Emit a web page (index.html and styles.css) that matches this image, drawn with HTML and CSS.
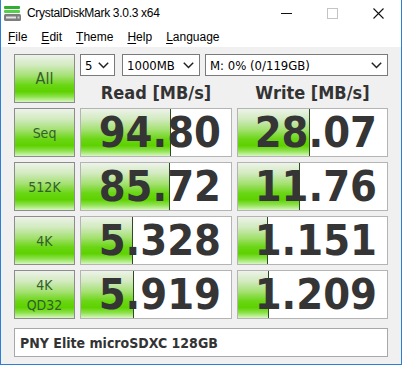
FILE: index.html
```html
<!DOCTYPE html>
<html>
<head>
<meta charset="utf-8">
<link rel="stylesheet" href="styles.css">
</head>
<body>
<div class="window">
  <div class="titlebar">
    <svg class="app-icon" width="18" height="16" viewBox="0 0 18 16">
      <rect x="0" y="0" width="16" height="3" rx="1" fill="#2fae2f"/>
      <rect x="0" y="4" width="16" height="3" rx="1" fill="#56d04a"/>
      <rect x="0" y="8" width="17" height="7" rx="1.5" fill="#7d7d7d"/>
      <rect x="2" y="10.5" width="10" height="2" fill="#e4e4e4"/>
      <rect x="13.5" y="10.5" width="2" height="2" fill="#cfcfcf"/>
    </svg>
    <span class="title">CrystalDiskMark 3.0.3 x64</span>
    <div class="controls">
      <span class="ctl"><svg width="11" height="11" viewBox="0 0 11 11"><line x1="0" y1="5.5" x2="11" y2="5.5" stroke="#111" stroke-width="1"/></svg></span>
      <span class="ctl"><svg width="11" height="11" viewBox="0 0 11 11"><rect x="0.5" y="0.5" width="10" height="10" fill="none" stroke="#c4c4c4" stroke-width="1"/></svg></span>
      <span class="ctl"><svg width="11" height="11" viewBox="0 0 11 11"><path d="M0.5 0.5 L10.5 10.5 M10.5 0.5 L0.5 10.5" stroke="#111" stroke-width="1.1" fill="none"/></svg></span>
    </div>
  </div>
  <div class="menubar">
    <span class="menu"><u>F</u>ile</span>
    <span class="menu"><u>E</u>dit</span>
    <span class="menu"><u>T</u>heme</span>
    <span class="menu"><u>H</u>elp</span>
    <span class="menu"><u>L</u>anguage</span>
  </div>
  <div class="client">
    <div class="grid">
      <div class="btn all">All</div>
      <div class="selects">
        <div class="sel s1"><span>5</span><svg class="chev" width="11" height="7" viewBox="0 0 11 7"><path d="M0.8 0.8 L5.5 5.5 L10.2 0.8" fill="none" stroke="#222" stroke-width="1.5"/></svg></div>
        <div class="sel s2"><span>1000MB</span><svg class="chev" width="11" height="7" viewBox="0 0 11 7"><path d="M0.8 0.8 L5.5 5.5 L10.2 0.8" fill="none" stroke="#222" stroke-width="1.5"/></svg></div>
        <div class="sel s3"><span>M: 0% (0/119GB)</span><svg class="chev" width="11" height="7" viewBox="0 0 11 7"><path d="M0.8 0.8 L5.5 5.5 L10.2 0.8" fill="none" stroke="#222" stroke-width="1.5"/></svg></div>
      </div>
      <div class="hdr">Read [MB/s]</div>
      <div class="hdr">Write [MB/s]</div>

      <div class="btn">Seq</div>
      <div class="cell"><div class="bar" style="width:89px"></div><span class="val">94.80</span></div>
      <div class="cell"><div class="bar" style="width:71px"></div><span class="val">28.07</span></div>

      <div class="btn">512K</div>
      <div class="cell"><div class="bar" style="width:88px"></div><span class="val">85.72</span></div>
      <div class="cell"><div class="bar" style="width:61px"></div><span class="val">11.76</span></div>

      <div class="btn">4K</div>
      <div class="cell"><div class="bar" style="width:51px"></div><span class="val">5.328</span></div>
      <div class="cell"><div class="bar" style="width:29px"></div><span class="val">1.151</span></div>

      <div class="btn two">4K<br>QD32</div>
      <div class="cell"><div class="bar" style="width:52px"></div><span class="val">5.919</span></div>
      <div class="cell"><div class="bar" style="width:30px"></div><span class="val">1.209</span></div>
    </div>
    <div class="comment">PNY Elite microSDXC 128GB</div>
  </div>
</div>
</body>
</html>
```

FILE: styles.css
```css
html, body {
  margin: 0;
  padding: 0;
  background: #ffffff;
}

.window {
  width: 400px;
  height: 364px;
  border: 1px solid #2b7fd6;
  border-top: none;
  background: #f0f0f0;
  display: flex;
  flex-direction: column;
}

.titlebar {
  height: 26px;
  background: #ffffff;
  display: flex;
  align-items: center;
  padding-left: 3px;
}

.app-icon {
  display: block;
  margin-top: 2px;
}

.title {
  margin-left: 5px;
  font-family: "Liberation Sans", Arial, sans-serif;
  font-size: 12px;
  letter-spacing: -0.3px;
  color: #000;
  flex: 1;
}

.controls {
  display: flex;
  align-self: stretch;
}

.ctl {
  width: 46px;
  display: flex;
  align-items: center;
  justify-content: center;
}

.ctl svg {
  display: block;
}

.menubar {
  height: 21px;
  background: #ffffff;
  display: flex;
  align-items: center;
  gap: 14px;
  padding-left: 7px;
  font-family: "Liberation Sans", Arial, sans-serif;
  font-size: 12px;
  color: #000;
}

.menu u {
  text-decoration: underline;
  text-underline-offset: 2px;
}

.client {
  padding: 7px 13px 0 13px;
}

.grid {
  display: grid;
  grid-template-columns: 61px 152px 151px;
  grid-template-rows: 22px 22px 49px 49px 49px 49px;
  column-gap: 5px;
  row-gap: 5px;
}

.btn {
  box-sizing: border-box;
  border: 1px solid #8c8c8c;
  background: linear-gradient(to bottom, #eef3ea 0%, #d2eabf 22%, #a2e06e 45%, #6ad614 64%, #5ed200 78%, #8ee24e 89%, #d8f6c2 100%);
  display: flex;
  align-items: center;
  justify-content: center;
  text-align: center;
  font-family: "DejaVu Sans Condensed", "DejaVu Sans", sans-serif;
  font-stretch: condensed;
  font-size: 14px;
  color: #33602a;
}

.btn.all {
  grid-row: 1 / 3;
  grid-column: 1;
  font-size: 16px;
}

.btn.two {
  font-size: 14px;
  line-height: 20px;
}

.selects {
  grid-row: 1;
  grid-column: 2 / 4;
  display: flex;
}

.sel {
  box-sizing: border-box;
  height: 22px;
  border: 1px solid #7a7a7a;
  background: #ffffff;
  display: flex;
  align-items: center;
  justify-content: space-between;
  padding: 0 5px 0 4px;
  font-family: "DejaVu Sans Condensed", "DejaVu Sans", sans-serif;
  font-stretch: condensed;
  font-size: 13px;
  color: #000;
}

.sel .chev {
  display: block;
}

.s1 { width: 35px; margin-right: 7px; }
.s2 { width: 78px; margin-right: 5px; }
.s3 { width: 183px; padding-left: 4px; }

.hdr {
  grid-row: 2;
  display: flex;
  align-items: flex-end;
  justify-content: center;
  font-family: "DejaVu Sans Condensed", "DejaVu Sans", sans-serif;
  font-stretch: condensed;
  font-weight: bold;
  font-size: 18px;
  line-height: 20px;
  color: #333333;
}

.cell {
  position: relative;
  box-sizing: border-box;
  border: 1px solid #b4b4b4;
  background: #ffffff;
  display: flex;
  align-items: center;
  justify-content: flex-end;
  padding-right: 10px;
  overflow: hidden;
}

.bar {
  position: absolute;
  left: 0;
  top: 0;
  bottom: 0;
  border-right: 1px solid #2f4a22;
  background: linear-gradient(to bottom, #eef3ea 0%, #d2eabf 22%, #a2e06e 45%, #6ad614 64%, #5ed200 78%, #8ee24e 89%, #d8f6c2 100%);
}

.val {
  position: relative;
  font-family: "DejaVu Sans Condensed", "DejaVu Sans", sans-serif;
  font-stretch: condensed;
  font-weight: bold;
  font-size: 43px;
  line-height: 47px;
  color: #353535;
}

.comment {
  box-sizing: border-box;
  margin-top: 9px;
  width: 374px;
  height: 29px;
  border: 1px solid #a8a8a8;
  background: #ffffff;
  display: flex;
  align-items: center;
  padding-left: 5px;
  font-family: "DejaVu Sans Condensed", "DejaVu Sans", sans-serif;
  font-stretch: condensed;
  font-weight: bold;
  font-size: 14px;
  color: #333333;
}
```
